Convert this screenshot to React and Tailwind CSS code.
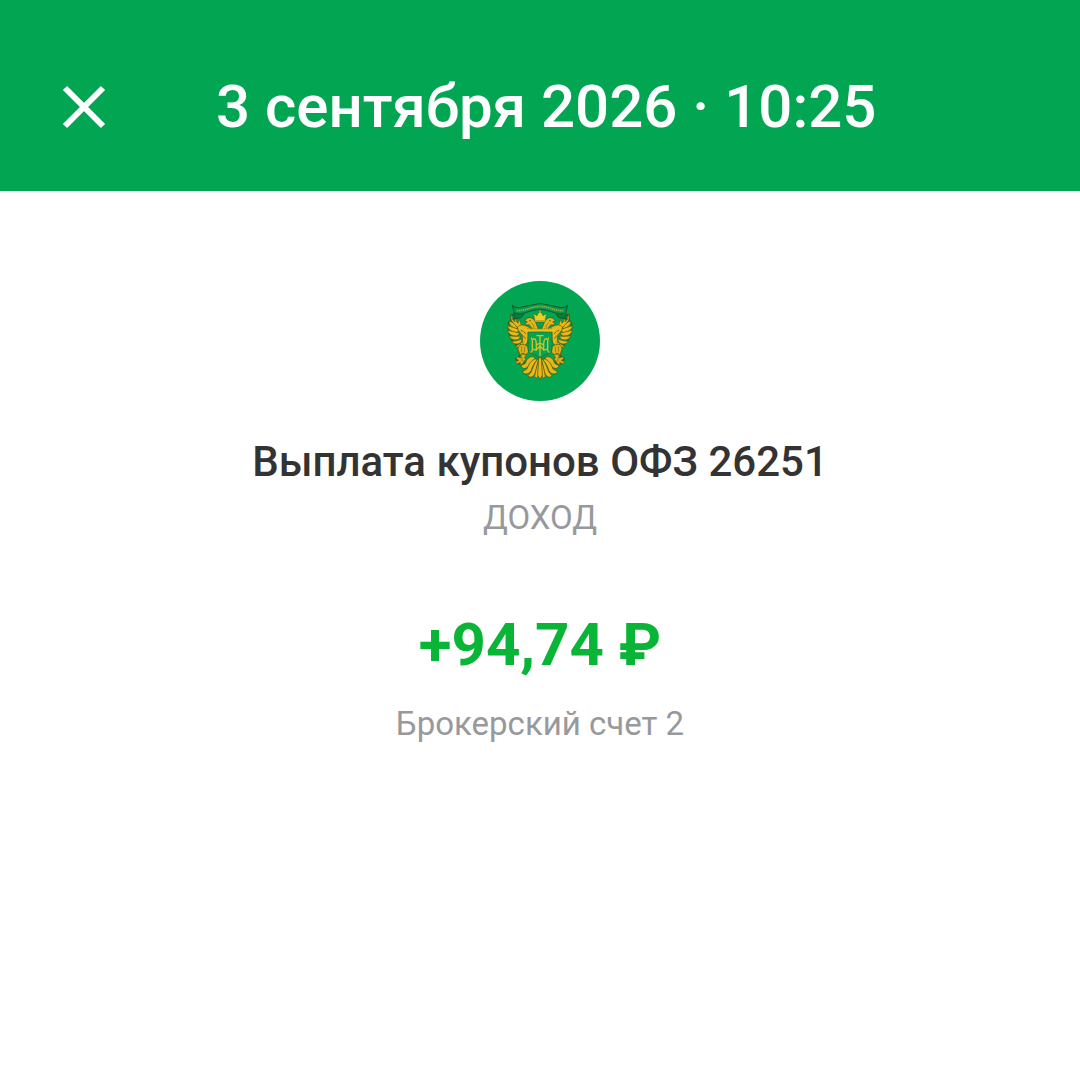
function CloseIcon() {
  return (
    <svg viewBox="0 0 44 44" className="size-11" fill="none" stroke="currentColor" strokeWidth="6" aria-hidden="true">
      <path d="M3 3 41 41M41 3 3 41" />
    </svg>
  );
}

function EagleHalf() {
  return (
    <g strokeLinejoin="round" strokeLinecap="round">
      {/* dark edge behind the wing and leg */}
      <path d="M33 57 C31 68 35 78 27 77 L25 89 26 104 30 119 38 136 50 148 66 150 56 166 62 176 48 188 56 204 74 202" fill="none" stroke="#2f6a22" strokeWidth="5" />
      {/* wing feathers */}
      <g fill="#e6b91a" stroke="#5c5812" strokeWidth="2">
        <path d="M62 92 C52 84 38 80 28 75 C26 84 34 92 46 98Z" />
        <path d="M60 102 C48 96 32 92 23 89 C23 99 34 107 48 110Z" />
        <path d="M60 112 C48 108 32 105 23 103 C25 114 36 121 50 120Z" />
        <path d="M62 121 C50 121 36 121 27 119 C31 130 44 135 56 130Z" />
        <path d="M66 129 C56 133 44 136 34 136 C40 145 54 147 63 139Z" />
        <path d="M70 134 C64 141 55 147 46 150 C54 157 67 154 73 143Z" />
        <path d="M33 55 C31 66 33 74 41 82 C45 88 50 92 56 98 L78 104 78 96 C64 90 60 82 60 72 C56 72 54 77 54 82 C48 78 50 68 46 62 C42 66 45 74 45 78 C38 73 37 64 33 55Z" />
        <path d="M52 94 C60 82 76 87 86 94 L112 102 112 108 86 108 84 130 C82 142 78 149 70 148 C66 138 70 126 66 116 C60 110 54 104 52 94Z" />
      </g>
      <path d="M63 103 Q72 104 77 113M65 117 Q72 118 76 127" fill="none" stroke="#8b6d14" strokeWidth="3" />
      {/* head */}
      <path d="M94 101 C96 94 92 90 87 86 C82 88 77 86 75 82 L82 78 74 75 C79 65 91 62 99 68 L104 74 109 80 C111 88 112 95 118 101Z" fill="#e3b71b" stroke="#4a4a12" strokeWidth="2" />
      <circle cx="90" cy="74" r="2" fill="#36420f" />
      <path d="M95 80 Q103 86 102 96" fill="none" stroke="#8b6d14" strokeWidth="2" />
      {/* leg and claw */}
      <g fill="#dab01b" stroke="#5c5812" strokeWidth="2">
        <path d="M62 145 C72 144 84 150 87 160 C87 167 83 173 77 177 L69 172 60 178 57 168 C52 160 54 151 62 145Z" />
        <path d="M64 174 L62 186 52 182 48 188 56 193 46 198 51 204 61 199 60 207 68 204 72 195 78 192 74 184 79 177Z" />
      </g>
      <path d="M65 151 L64 168M74 154 L73 168M65 184 L67 195" fill="none" stroke="#8b6d14" strokeWidth="2" />
      {/* tail feathers */}
      <g fill="#e6b91a" stroke="#4a4a12" strokeWidth="2">
        <path d="M104 184 C92 178 80 186 77 200 C74 208 64 202 64 211 C67 221 81 218 87 209 C92 200 96 194 104 194Z" />
        <path d="M108 188 C92 192 85 207 82 217 C79 224 71 220 68 229 C77 239 91 233 95 220 C98 211 102 202 111 193Z" />
        <path d="M113 189 C101 203 98 219 93 228 C90 235 84 234 84 241 C95 248 105 239 108 224 L116 192Z" />
        <path d="M117 187 C111 205 108 221 105 235 C102 244 108 250 113 243 C117 235 115 219 119 190Z" />
      </g>
    </g>
  );
}

function Emblem() {
  return (
    <svg viewBox="0 0 360 360" className="size-30" role="img" aria-label="Герб Министерства финансов">
      <circle cx="180" cy="180" r="180" fill="#02a652" />
      <g transform="translate(60 45)">
        <EagleHalf />
        <g transform="translate(240 0) scale(-1 1)">
          <EagleHalf />
        </g>
        <path d="M116 184 L113 237 120 251 127 237 124 184Z" fill="#e6b91a" stroke="#4a4a12" strokeWidth="2" />
        {/* shield */}
        <path d="M84 108 H156 V158 C156 171 145 176 134 177 L120 186 106 177 C95 176 84 171 84 158Z" fill="#02a652" stroke="#28742e" strokeWidth="3" />
        <path d="M74 103 H166" stroke="#ecc11a" strokeWidth="7" />
        <path d="M82 98 H158" stroke="#80711a" strokeWidth="2" strokeDasharray="4 3" />
        {/* monogram */}
        <g fill="none" stroke="#d2c027" strokeWidth="4">
          <path d="M109 119 H131M120 119 V181" />
          <path d="M93 126 Q97 127 97 134 V163 Q97 168 91 169M147 126 Q143 127 143 134 V163 Q143 168 149 169" />
          <path d="M97 131 Q108 122 109 143 V164M143 131 Q132 122 131 143 V164" />
          <path d="M97 157 Q106 169 120 150 Q134 169 143 157M109 148 Q120 136 131 148" />
        </g>
        {/* ribbon */}
        <path d="M49 49 L36 57 45 62 39 70 63 65 73 54M191 49 L204 57 195 62 201 70 177 65 167 54" fill="#087c3e" stroke="#17542e" strokeWidth="3" />
        <path d="M37 27 Q45 37 61 34 Q91 28 120 22 Q149 28 179 34 Q195 37 203 27 L197 51 Q182 57 163 50 Q140 41 120 40 Q100 41 77 50 Q58 57 43 51Z" fill="#07994b" stroke="#17542e" strokeWidth="3" strokeLinejoin="round" />
        <path d="M50 44 Q71 44 91 36 Q120 27 149 36 Q169 44 190 44" fill="none" stroke="#8fb04a" strokeWidth="5" strokeDasharray="4 2" />
        {/* crown */}
        <path d="M106 78 L101 53 111 60 115 52 118 50 V43 H122 V50 L125 52 129 60 139 53 134 78Z" fill="#f0cd20" stroke="#5c5812" strokeWidth="1" />
        <path d="M108 74 H132" stroke="#a68a1b" strokeWidth="2" />
        <path d="M107 79 H133 Q132 91 120 94 Q108 91 107 79Z" fill="#02a652" stroke="#28742e" strokeWidth="2" />
      </g>
    </svg>
  );
}

export default function App() {
  return (
    <div className="min-h-screen bg-white font-['Roboto',sans-serif]">
      <header className="flex items-center bg-[#02a652] px-15 pt-[71px] pb-[49px] text-white">
        <button type="button" aria-label="Закрыть" className="p-0.5">
          <CloseIcon />
        </button>
        <h1 className="ml-27 text-[60px] leading-[71px] font-medium">3 сентября 2026 · 10:25</h1>
      </header>
      <main className="flex flex-col items-center px-8 pt-[90px] text-center">
        <Emblem />
        <h2 className="mt-[33px] text-[42px] leading-14 font-medium text-[#333333]">Выплата купонов ОФЗ 26251</h2>
        <p className="mt-1 text-[33px] leading-12 text-[#97999c]">ДОХОД</p>
        <p className="mt-[67px] text-[60px] leading-18 font-bold text-[#08b536]">+94,74 ₽</p>
        <p className="mt-[19px] text-[33px] leading-12 text-[#97999c]">Брокерский счет 2</p>
      </main>
    </div>
  );
}
